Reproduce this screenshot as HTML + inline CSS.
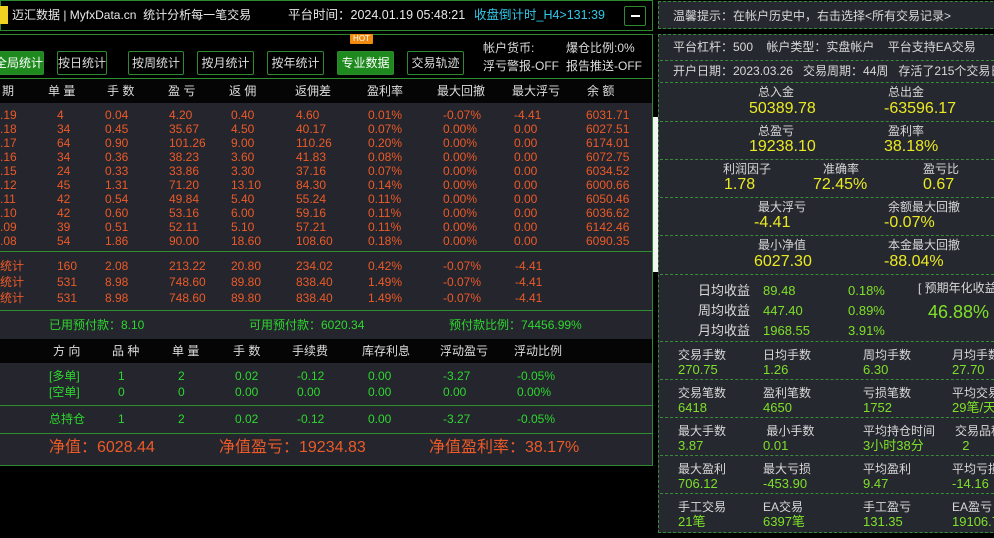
<!DOCTYPE html><html><head><meta charset="utf-8"><style>
*{margin:0;padding:0;box-sizing:border-box}
body{width:994px;height:538px;background:#000;position:relative;overflow:hidden;font-family:"Liberation Sans","Noto Sans CJK SC",sans-serif;font-size:12px;color:#ddd}
.a{position:absolute;white-space:nowrap;line-height:14px}
.r{color:#ec5a28}.g{color:#2ed82e}.y{color:#eaea22;font-size:16px;line-height:20px}.lg{color:#7ee028;font-size:13px;line-height:15px}
.btn{position:absolute;top:51px;height:24px;border:1px solid #2f8a2f;color:#ddd;font-size:12px;line-height:22px;text-align:center;border-radius:2px}
.btn.on{background:#1e8a1e;color:#fff}
.hl{position:absolute;left:0;width:652px;height:1px;background:#2f8f2f}
.dl{position:absolute;left:660px;width:334px;border-top:1px dashed #3a8a3a}
.w{color:#d8d8d8;font-size:12px}
</style></head><body>
<div style="position:absolute;left:0;top:0;width:653px;height:31px;border:1px solid #2f8a2f;background:#000"></div>
<div style="position:absolute;left:0;top:6px;width:8px;height:18px;background:#f0d020"></div>
<div class="a" style="left:12px;top:8px;font-size:12px;color:#e8e8e8">迈汇数据 | MyfxData.cn&nbsp; 统计分析每一笔交易</div>
<div class="a" style="left:288px;top:8px;font-size:12.5px;color:#e8e8e8">平台时间：2024.01.19 05:48:21</div>
<div class="a" style="left:474px;top:8px;font-size:12.5px;color:#30c8e8">收盘倒计时_H4&gt;131:39</div>
<div style="position:absolute;left:624px;top:6px;width:22px;height:20px;border:1px solid #2f8a2f;border-radius:2px"></div>
<div style="position:absolute;left:631px;top:15px;width:9px;height:2px;background:#fff"></div>
<div style="position:absolute;left:0;top:34px;width:653px;height:432px;border:1px solid #2f8a2f;border-left:none;background:#24252d"></div>
<div style="position:absolute;left:0;top:35px;width:652px;height:43px;background:#000"></div>
<div class="btn on" style="left:-6px;width:50px">全局统计</div>
<div class="btn" style="left:57px;width:50px">按日统计</div>
<div class="btn" style="left:128px;width:56px">按周统计</div>
<div class="btn" style="left:197px;width:57px">按月统计</div>
<div class="btn" style="left:267px;width:57px">按年统计</div>
<div class="btn on" style="left:337px;width:57px">专业数据</div>
<div class="btn" style="left:407px;width:57px">交易轨迹</div>
<div style="position:absolute;left:350px;top:34px;width:23px;height:10px;background:#f08a10;color:#fff;font-size:8px;line-height:10px;text-align:center;border-radius:1px">HOT</div>
<div class="a" style="left:483px;top:41px">帐户货币:</div><div class="a" style="left:566px;top:41px">爆仓比例:0%</div>
<div class="a" style="left:483px;top:59px">浮亏警报-OFF</div><div class="a" style="left:566px;top:59px">报告推送-OFF</div>
<div class="hl" style="top:78px"></div>
<div style="position:absolute;left:0;top:79px;width:652px;height:24px;background:#050505"></div>
<div class="a" style="left:2px;top:84px">期</div><div class="a" style="left:48px;top:84px">单 量</div><div class="a" style="left:107px;top:84px">手 数</div><div class="a" style="left:168px;top:84px">盈 亏</div><div class="a" style="left:229px;top:84px">返 佣</div><div class="a" style="left:295px;top:84px">返佣差</div><div class="a" style="left:367px;top:84px">盈利率</div><div class="a" style="left:437px;top:84px">最大回撤</div><div class="a" style="left:512px;top:84px">最大浮亏</div><div class="a" style="left:587px;top:84px">余 额</div>
<div class="a r" style="left:0;top:108px">.19<br>.18<br>.17<br>.16<br>.15<br>.12<br>.11<br>.10<br>.09<br>.08</div>
<div class="a r" style="left:57px;top:108px">4<br>34<br>64<br>34<br>24<br>45<br>42<br>42<br>39<br>54</div>
<div class="a r" style="left:105px;top:108px">0.04<br>0.45<br>0.90<br>0.36<br>0.33<br>1.31<br>0.54<br>0.60<br>0.51<br>1.86</div>
<div class="a r" style="left:169px;top:108px">4.20<br>35.67<br>101.26<br>38.23<br>33.86<br>71.20<br>49.84<br>53.16<br>52.11<br>90.00</div>
<div class="a r" style="left:231px;top:108px">0.40<br>4.50<br>9.00<br>3.60<br>3.30<br>13.10<br>5.40<br>6.00<br>5.10<br>18.60</div>
<div class="a r" style="left:296px;top:108px">4.60<br>40.17<br>110.26<br>41.83<br>37.16<br>84.30<br>55.24<br>59.16<br>57.21<br>108.60</div>
<div class="a r" style="left:368px;top:108px">0.01%<br>0.07%<br>0.20%<br>0.08%<br>0.07%<br>0.14%<br>0.11%<br>0.11%<br>0.11%<br>0.18%</div>
<div class="a r" style="left:443px;top:108px">-0.07%<br>0.00%<br>0.00%<br>0.00%<br>0.00%<br>0.00%<br>0.00%<br>0.00%<br>0.00%<br>0.00%</div>
<div class="a r" style="left:514px;top:108px">-4.41<br>0.00<br>0.00<br>0.00<br>0.00<br>0.00<br>0.00<br>0.00<br>0.00<br>0.00</div>
<div class="a r" style="left:586px;top:108px">6031.71<br>6027.51<br>6174.01<br>6072.75<br>6034.52<br>6000.66<br>6050.46<br>6036.62<br>6142.46<br>6090.35</div>
<div class="hl" style="top:251px"></div>
<div class="a r" style="left:0;top:258px;line-height:16px">统计<br>统计<br>统计</div>
<div class="a r" style="left:57px;top:258px;line-height:16px">160<br>531<br>531</div>
<div class="a r" style="left:105px;top:258px;line-height:16px">2.08<br>8.98<br>8.98</div>
<div class="a r" style="left:169px;top:258px;line-height:16px">213.22<br>748.60<br>748.60</div>
<div class="a r" style="left:231px;top:258px;line-height:16px">20.80<br>89.80<br>89.80</div>
<div class="a r" style="left:296px;top:258px;line-height:16px">234.02<br>838.40<br>838.40</div>
<div class="a r" style="left:368px;top:258px;line-height:16px">0.42%<br>1.49%<br>1.49%</div>
<div class="a r" style="left:443px;top:258px;line-height:16px">-0.07%<br>-0.07%<br>-0.07%</div>
<div class="a r" style="left:515px;top:258px;line-height:16px">-4.41<br>-4.41<br>-4.41</div>
<div class="hl" style="top:310px"></div>
<div class="a g" style="left:49px;top:318px">已用预付款：8.10</div><div class="a g" style="left:249px;top:318px">可用预付款：6020.34</div><div class="a g" style="left:449px;top:318px">预付款比例：74456.99%</div>
<div style="position:absolute;left:0;top:339px;width:652px;height:24px;background:#050505"></div>
<div class="a" style="left:53px;top:344px">方 向</div><div class="a" style="left:112px;top:344px">品 种</div><div class="a" style="left:172px;top:344px">单 量</div><div class="a" style="left:233px;top:344px">手 数</div><div class="a" style="left:292px;top:344px">手续费</div><div class="a" style="left:362px;top:344px">库存利息</div><div class="a" style="left:440px;top:344px">浮动盈亏</div><div class="a" style="left:514px;top:344px">浮动比例</div>
<div class="a g" style="left:49px;top:368px;line-height:16px">[多单]<br>[空单]</div>
<div class="a g" style="left:118px;top:368px;line-height:16px">1<br>0</div>
<div class="a g" style="left:178px;top:368px;line-height:16px">2<br>0</div>
<div class="a g" style="left:235px;top:368px;line-height:16px">0.02<br>0.00</div>
<div class="a g" style="left:297px;top:368px;line-height:16px">-0.12<br>0.00</div>
<div class="a g" style="left:368px;top:368px;line-height:16px">0.00<br>0.00</div>
<div class="a g" style="left:443px;top:368px;line-height:16px">-3.27<br>0.00</div>
<div class="a g" style="left:517px;top:368px;line-height:16px">-0.05%<br>0.00%</div>
<div class="hl" style="top:405px"></div>
<div class="a g" style="left:49px;top:412px">总持仓</div><div class="a g" style="left:118px;top:412px">1</div><div class="a g" style="left:178px;top:412px">2</div><div class="a g" style="left:235px;top:412px">0.02</div><div class="a g" style="left:297px;top:412px">-0.12</div><div class="a g" style="left:368px;top:412px">0.00</div><div class="a g" style="left:443px;top:412px">-3.27</div><div class="a g" style="left:517px;top:412px">-0.05%</div>
<div class="hl" style="top:433px"></div>
<div class="a r" style="left:49px;top:439px;font-size:16px;line-height:18px">净值：6028.44</div>
<div class="a r" style="left:219px;top:439px;font-size:16px;line-height:18px">净值盈亏：19234.83</div>
<div class="a r" style="left:429px;top:439px;font-size:16px;line-height:18px">净值盈利率：38.17%</div>
<div style="position:absolute;left:653px;top:117px;width:5px;height:155px;background:#f4f4f4"></div>
<div style="position:absolute;left:658px;top:1px;width:340px;height:28px;border:1px dashed #3a8a3a;background:#262830"></div>
<div class="a w" style="left:673px;top:9px">温馨提示：在帐户历史中，右击选择&lt;所有交易记录&gt;</div>
<div style="position:absolute;left:658px;top:34px;width:340px;height:499px;border:1px dashed #3a8a3a;background:#262830"></div>
<div class="a w" style="left:673px;top:40px">平台杠杆：500 &nbsp;&nbsp; 帐户类型：实盘帐户 &nbsp;&nbsp; 平台支持EA交易</div>
<div class="dl" style="top:60px"></div>
<div class="a w" style="left:673px;top:64px">开户日期：2023.03.26 &nbsp; 交易周期：44周 &nbsp; 存活了215个交易日</div>
<div class="dl" style="top:82px"></div>
<div class="a w" style="left:758px;top:85px">总入金</div><div class="a w" style="left:888px;top:85px">总出金</div>
<div class="a y" style="left:749px;top:99px">50389.78</div><div class="a y" style="left:884px;top:99px">-63596.17</div>
<div class="dl" style="top:121px"></div>
<div class="a w" style="left:758px;top:124px">总盈亏</div><div class="a w" style="left:888px;top:124px">盈利率</div>
<div class="a y" style="left:749px;top:137px">19238.10</div><div class="a y" style="left:884px;top:137px">38.18%</div>
<div class="dl" style="top:159px"></div>
<div class="a w" style="left:723px;top:162px">利润因子</div><div class="a w" style="left:823px;top:162px">准确率</div><div class="a w" style="left:923px;top:162px">盈亏比</div>
<div class="a y" style="left:724px;top:175px">1.78</div><div class="a y" style="left:813px;top:175px">72.45%</div><div class="a y" style="left:923px;top:175px">0.67</div>
<div class="dl" style="top:197px"></div>
<div class="a w" style="left:758px;top:200px">最大浮亏</div><div class="a w" style="left:888px;top:200px">余额最大回撤</div>
<div class="a y" style="left:754px;top:213px">-4.41</div><div class="a y" style="left:884px;top:213px">-0.07%</div>
<div class="dl" style="top:235px"></div>
<div class="a w" style="left:758px;top:238px">最小净值</div><div class="a w" style="left:888px;top:238px">本金最大回撤</div>
<div class="a y" style="left:754px;top:252px">6027.30</div><div class="a y" style="left:884px;top:252px">-88.04%</div>
<div class="dl" style="top:274px"></div>
<div class="a w" style="left:698px;top:281px;line-height:20px;font-size:13px">日均收益<br>周均收益<br>月均收益</div>
<div class="a" style="left:763px;top:281px;line-height:20px;font-size:13px;color:#7ee028">89.48<br>447.40<br>1968.55</div>
<div class="a" style="left:848px;top:281px;line-height:20px;font-size:13px;color:#7ee028">0.18%<br>0.89%<br>3.91%</div>
<div class="a w" style="left:918px;top:281px">[ 预期年化收益</div>
<div class="a" style="left:928px;top:302px;font-size:18px;line-height:20px;color:#7ee028">46.88%</div>
<div class="dl" style="top:341px"></div>
<div class="a w" style="left:678px;top:348px">交易手数<br><span class="lg">270.75</span></div>
<div class="a w" style="left:763px;top:348px">日均手数<br><span class="lg">1.26</span></div>
<div class="a w" style="left:863px;top:348px">周均手数<br><span class="lg">6.30</span></div>
<div class="a w" style="left:952px;top:348px">月均手数<br><span class="lg">27.70</span></div>
<div class="dl" style="top:379px"></div>
<div class="a w" style="left:678px;top:386px">交易笔数<br><span class="lg">6418</span></div>
<div class="a w" style="left:763px;top:386px">盈利笔数<br><span class="lg">4650</span></div>
<div class="a w" style="left:863px;top:386px">亏损笔数<br><span class="lg">1752</span></div>
<div class="a w" style="left:952px;top:386px">平均交易<br><span class="lg">29笔/天</span></div>
<div class="dl" style="top:417px"></div>
<div class="a w" style="left:678px;top:424px">最大手数<br><span class="lg">3.87</span></div>
<div class="a w" style="left:763px;top:424px">&nbsp;最小手数<br><span class="lg">0.01</span></div>
<div class="a w" style="left:863px;top:424px">平均持仓时间<br><span class="lg">3小时38分</span></div>
<div class="a w" style="left:955px;top:424px">交易品种<br><span class="lg">&nbsp;&nbsp;2</span></div>
<div class="dl" style="top:455px"></div>
<div class="a w" style="left:678px;top:462px">最大盈利<br><span class="lg">706.12</span></div>
<div class="a w" style="left:763px;top:462px">最大亏损<br><span class="lg">-453.90</span></div>
<div class="a w" style="left:863px;top:462px">平均盈利<br><span class="lg">9.47</span></div>
<div class="a w" style="left:952px;top:462px">平均亏损<br><span class="lg">-14.16</span></div>
<div class="dl" style="top:493px"></div>
<div class="a w" style="left:678px;top:500px">手工交易<br><span class="lg">21笔</span></div>
<div class="a w" style="left:763px;top:500px">EA交易<br><span class="lg">6397笔</span></div>
<div class="a w" style="left:863px;top:500px">手工盈亏<br><span class="lg">131.35</span></div>
<div class="a w" style="left:952px;top:500px">EA盈亏<br><span class="lg">19106.75</span></div>
</body></html>
